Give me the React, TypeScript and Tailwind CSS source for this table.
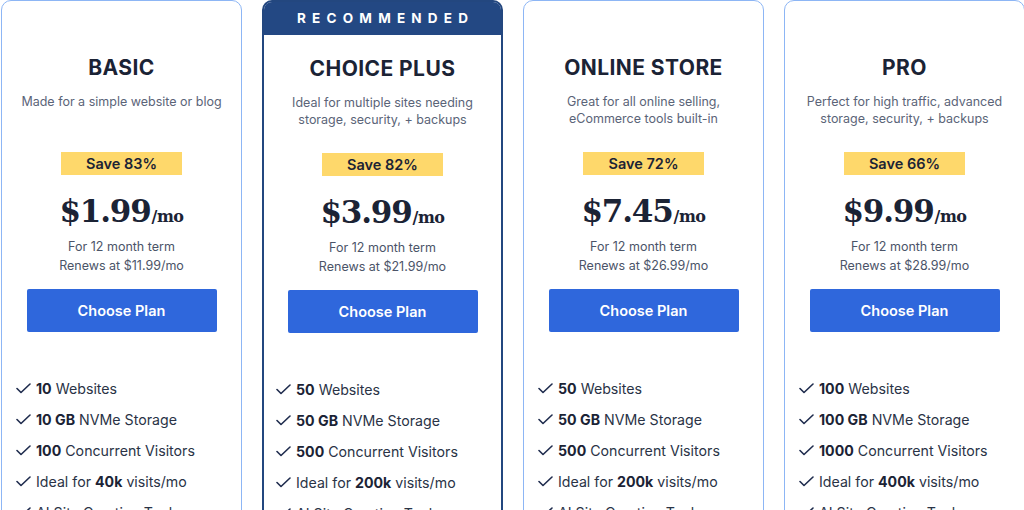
import React from "react";

type Plan = {
  name: string;
  desc: string[];
  save: string;
  price: string;
  renew: string;
  features: React.ReactNode[];
  recommended?: boolean;
};

const B = ({ children }: { children: React.ReactNode }) => (
  <span className="font-bold text-[#1b2335]">{children}</span>
);

const plans: Plan[] = [
  {
    name: "BASIC",
    desc: ["Made for a simple website or blog"],
    save: "Save 83%",
    price: "$1.99",
    renew: "Renews at $11.99/mo",
    features: [
      <><B>10</B> Websites</>,
      <><B>10 GB</B> NVMe Storage</>,
      <><B>100</B> Concurrent Visitors</>,
      <>Ideal for <B>40k</B> visits/mo</>,
      <>AI Site Creation Tools</>,
    ],
  },
  {
    name: "CHOICE PLUS",
    desc: ["Ideal for multiple sites needing", "storage, security, + backups"],
    save: "Save 82%",
    price: "$3.99",
    renew: "Renews at $21.99/mo",
    recommended: true,
    features: [
      <><B>50</B> Websites</>,
      <><B>50 GB</B> NVMe Storage</>,
      <><B>500</B> Concurrent Visitors</>,
      <>Ideal for <B>200k</B> visits/mo</>,
      <>AI Site Creation Tools</>,
    ],
  },
  {
    name: "ONLINE STORE",
    desc: ["Great for all online selling,", "eCommerce tools built-in"],
    save: "Save 72%",
    price: "$7.45",
    renew: "Renews at $26.99/mo",
    features: [
      <><B>50</B> Websites</>,
      <><B>50 GB</B> NVMe Storage</>,
      <><B>500</B> Concurrent Visitors</>,
      <>Ideal for <B>200k</B> visits/mo</>,
      <>AI Site Creation Tools</>,
    ],
  },
  {
    name: "PRO",
    desc: ["Perfect for high traffic, advanced", "storage, security, + backups"],
    save: "Save 66%",
    price: "$9.99",
    renew: "Renews at $28.99/mo",
    features: [
      <><B>100</B> Websites</>,
      <><B>100 GB</B> NVMe Storage</>,
      <><B>1000</B> Concurrent Visitors</>,
      <>Ideal for <B>400k</B> visits/mo</>,
      <>AI Site Creation Tools</>,
    ],
  },
];

const Check = () => (
  <svg width="15" height="11" viewBox="0 0 15 11" fill="none" className="shrink-0">
    <path d="M1 5.5 L5 9.5 L14 1" stroke="#1e2b4d" strokeWidth="1.6" strokeLinecap="round" strokeLinejoin="round" />
  </svg>
);

function Card({ plan }: { plan: Plan }) {
  const rec = plan.recommended;
  return (
    <div
      className={
        rec
          ? "w-[241px] h-[620px] shrink-0 rounded-[10px] border-2 border-[#23477f] bg-white overflow-hidden flex flex-col"
          : "w-[241px] h-[620px] shrink-0 rounded-[10px] border border-[#8db6f5] bg-white overflow-hidden flex flex-col"
      }
    >
      {rec ? (
        <div className="h-[33px] bg-[#234883] flex items-center justify-center text-white text-[13.5px] font-bold tracking-[0.46em] pl-[0.46em]">
          RECOMMENDED
        </div>
      ) : null}
      <div className={rec ? "pt-[21px] flex flex-col items-center" : "pt-[54px] flex flex-col items-center"}>
        <div className="h-[26px] leading-[26px] text-[21px] font-bold text-[#1b2335] tracking-[0.02em]">
          {plan.name}
        </div>
        <div className="mt-[12px] h-[34px] text-[12.5px] leading-[17px] text-[#5b6478] text-center">
          {plan.desc.map((d) => (
            <div key={d}>{d}</div>
          ))}
        </div>
        <div className="mt-[25px] w-[121px] h-[23px] bg-[#fed86b] flex items-center justify-center text-[14.5px] font-semibold text-[#1b2335]">
          {plan.save}
        </div>
        <div
          className="mt-[16px] h-[40px] flex items-baseline justify-center text-[#1b2335] font-bold"
          style={{ fontFamily: '"DejaVu Serif", serif' }}
        >
          <span className="text-[31px] leading-[40px] tracking-[-1.2px]">{plan.price}</span>
          <span className="text-[16px] leading-[40px] tracking-[-0.5px] ml-[1px]">/mo</span>
        </div>
        <div className="mt-[6px] text-[12.5px] leading-[19px] text-[#4b5468] text-center">
          <div>For 12 month term</div>
          <div>{plan.renew}</div>
        </div>
        <div className="mt-[14px] w-[190px] h-[43px] bg-[#2f67dc] rounded-[2px] flex items-center justify-center text-white text-[14.5px] font-semibold">
          Choose Plan
        </div>
      </div>
      <div className={rec ? "mt-[41px] pl-[12px] flex flex-col" : "mt-[41px] pl-[14px] flex flex-col"}>
        {plan.features.map((f, i) => (
          <div key={i} className="h-[31px] flex items-center gap-[5px] text-[14.2px] text-[#2a3346]">
            <Check />
            <span>{f}</span>
          </div>
        ))}
      </div>
    </div>
  );
}

export default function App() {
  return (
    <div
      className="w-[1024px] h-[510px] overflow-hidden bg-white"
      style={{ fontFamily: 'Inter, "Noto Sans", sans-serif' }}
    >
      <div className="flex gap-[20px] pl-[1px] w-[1100px]">
        {plans.map((p) => (
          <Card key={p.name} plan={p} />
        ))}
      </div>
    </div>
  );
}
